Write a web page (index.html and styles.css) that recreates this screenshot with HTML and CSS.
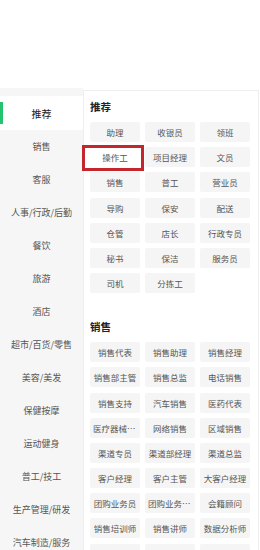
FILE: index.html
```html
<!DOCTYPE html>
<html lang="zh-CN">
<head>
<meta charset="utf-8">
<link rel="stylesheet" href="styles.css">
</head>
<body>
<div class="page">
  <div class="top"></div>
  <div class="main">
    <nav class="side">
      <div class="side-item active">推荐</div>
      <div class="side-item">销售</div>
      <div class="side-item">客服</div>
      <div class="side-item">人事/行政/后勤</div>
      <div class="side-item">餐饮</div>
      <div class="side-item">旅游</div>
      <div class="side-item">酒店</div>
      <div class="side-item">超市/百货/零售</div>
      <div class="side-item">美容/美发</div>
      <div class="side-item">保健按摩</div>
      <div class="side-item">运动健身</div>
      <div class="side-item">普工/技工</div>
      <div class="side-item">生产管理/研发</div>
      <div class="side-item">汽车制造/服务</div>
    </nav>
    <div class="panel">
      <section class="group">
        <h2 class="group-title">推荐</h2>
        <div class="grid">
          <div class="tile">助理</div>
          <div class="tile">收银员</div>
          <div class="tile">领班</div>
          <div class="tile picked">操作工</div>
          <div class="tile">项目经理</div>
          <div class="tile">文员</div>
          <div class="tile">销售</div>
          <div class="tile">普工</div>
          <div class="tile">营业员</div>
          <div class="tile">导购</div>
          <div class="tile">保安</div>
          <div class="tile">配送</div>
          <div class="tile">仓管</div>
          <div class="tile">店长</div>
          <div class="tile">行政专员</div>
          <div class="tile">秘书</div>
          <div class="tile">保洁</div>
          <div class="tile">服务员</div>
          <div class="tile">司机</div>
          <div class="tile">分拣工</div>
        </div>
      </section>
      <section class="group">
        <h2 class="group-title">销售</h2>
        <div class="grid">
          <div class="tile">销售代表</div>
          <div class="tile">销售助理</div>
          <div class="tile">销售经理</div>
          <div class="tile">销售部主管</div>
          <div class="tile">销售总监</div>
          <div class="tile">电话销售</div>
          <div class="tile">销售支持</div>
          <div class="tile">汽车销售</div>
          <div class="tile">医药代表</div>
          <div class="tile">医疗器械销售</div>
          <div class="tile">网络销售</div>
          <div class="tile">区域销售</div>
          <div class="tile">渠道专员</div>
          <div class="tile">渠道部经理</div>
          <div class="tile">渠道总监</div>
          <div class="tile">客户经理</div>
          <div class="tile">客户主管</div>
          <div class="tile">大客户经理</div>
          <div class="tile">团购业务员</div>
          <div class="tile">团购业务经理</div>
          <div class="tile">会籍顾问</div>
          <div class="tile">销售培训师</div>
          <div class="tile">销售讲师</div>
          <div class="tile">数据分析师</div>
          <div class="tile">销售运营</div>
          <div class="tile">商务经理</div>
          <div class="tile">招商经理</div>
        </div>
      </section>
    </div>
  </div>
</div>
</body>
</html>
```
FILE: styles.css
```css
html, body {
  margin: 0;
  padding: 0;
  background: #fff;
}
body {
  font-family: "Noto Sans CJK SC", "Noto Sans", sans-serif;
  overflow: hidden;
}
.top {
  height: 88px;
}
.main {
  display: flex;
  align-items: flex-start;
}
.side {
  flex: none;
  width: 83px;
  background: #f6f6f6;
  padding-top: 8px;
}
.side-item {
  height: 33px;
  display: flex;
  align-items: center;
  justify-content: center;
  font-size: 9px;
  color: #555;
  white-space: nowrap;
}
.side-item.active {
  position: relative;
  height: 34px;
  background: #fff;
  font-size: 10px;
  color: #222;
}
.side-item.active::before {
  content: "";
  position: absolute;
  left: 0;
  top: 6px;
  width: 3px;
  height: 22px;
  background: #25c26f;
}
.panel {
  flex: none;
  margin-top: 2px;
  width: 167px;
  border: 1px solid #eeeeee;
  border-bottom: none;
  padding: 8px 1px 0 6px;
  background: #fff;
}
.group + .group {
  margin-top: 26px;
}
.group-title {
  margin: 0 0 7px;
  font-size: 10.5px;
  line-height: 16px;
  font-weight: bold;
  color: #222;
}
.grid {
  display: grid;
  grid-template-columns: repeat(3, 50px);
  column-gap: 5px;
  row-gap: 5.2px;
}
.tile {
  height: 20px;
  line-height: 20px;
  padding: 0 3px;
  background: #f5f5f5;
  border-radius: 2px;
  font-size: 8.5px;
  color: #555;
  text-align: center;
  white-space: nowrap;
  overflow: hidden;
  text-overflow: ellipsis;
}
.tile.picked {
  position: relative;
  overflow: visible;
  background: #fff;
}
.tile.picked::after {
  content: "";
  position: absolute;
  box-sizing: border-box;
  left: -8px;
  right: -4px;
  top: -2px;
  bottom: -4px;
  border: 3px solid #c4262e;
}
```
